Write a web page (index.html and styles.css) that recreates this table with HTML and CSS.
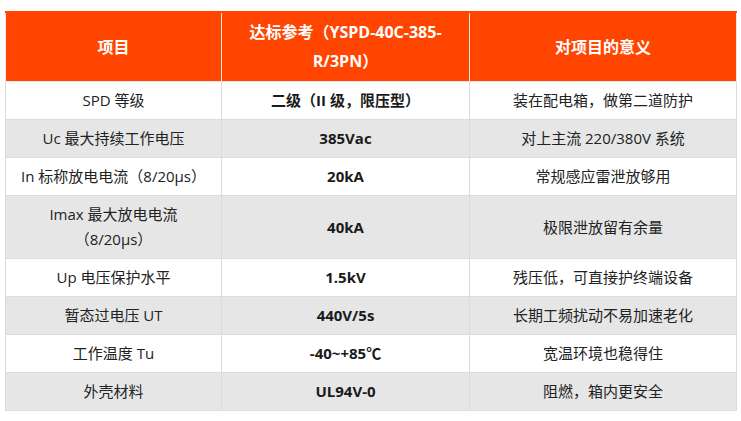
FILE: index.html
```html
<!DOCTYPE html>
<html lang="zh-CN">
<head>
<meta charset="utf-8">
<title>SPD 参数</title>
<link rel="stylesheet" href="styles.css">
</head>
<body>
<div class="wrap">
<table class="spec">
<colgroup>
<col class="c1"><col class="c2"><col class="c3">
</colgroup>
<thead>
<tr>
<th>项目</th>
<th>达标参考（YSPD-40C-385-R/3PN）</th>
<th>对项目的意义</th>
</tr>
</thead>
<tbody>
<tr><td>SPD 等级</td><td class="v">二级（II 级，限压型）</td><td>装在配电箱，做第二道防护</td></tr>
<tr class="alt"><td>Uc 最大持续工作电压</td><td class="v">385Vac</td><td>对上主流 220/380V 系统</td></tr>
<tr><td>In 标称放电电流（8/20μs）</td><td class="v">20kA</td><td>常规感应雷泄放够用</td></tr>
<tr class="alt"><td>Imax 最大放电电流<br>（8/20μs）</td><td class="v">40kA</td><td>极限泄放留有余量</td></tr>
<tr><td>Up 电压保护水平</td><td class="v">1.5kV</td><td>残压低，可直接护终端设备</td></tr>
<tr class="alt"><td>暂态过电压 UT</td><td class="v">440V/5s</td><td>长期工频扰动不易加速老化</td></tr>
<tr><td>工作温度 Tu</td><td class="v">-40~+85℃</td><td>宽温环境也稳得住</td></tr>
<tr class="alt"><td>外壳材料</td><td class="v">UL94V-0</td><td>阻燃，箱内更安全</td></tr>
</tbody>
</table>
</div>
</body>
</html>
```
FILE: styles.css
```css
html, body {
  margin: 0;
  padding: 0;
  background: #fff;
}
.wrap {
  padding: 11px 5px 0 5px;
}
.spec {
  width: 731px;
  border-collapse: collapse;
  table-layout: fixed;
  font-family: "Open Sans", "Noto Sans CJK SC", sans-serif;
  font-size: 15px;
  color: #222;
  border-top: 2px solid #ff4500;
}
.c1 { width: 216px; }
.c2 { width: 248px; }
.c3 { width: 267px; }
.spec th {
  background: #ff4500;
  color: #fff;
  font-size: 16px;
  font-weight: 700;
  line-height: 29px;
  padding: 5px 16px 5px;
  border: 1px solid #f1e6e2;
  border-top: 1px solid #fff;
  text-align: center;
}
.spec td {
  border: 1px solid #dcdcdc;
  text-align: center;
  line-height: 25px;
  padding: 6px 8px;
}
.spec td.v {
  font-weight: 700;
  color: #1a1a1a;
}
.spec tr.alt td {
  background: #e6e6e6;
}
```
